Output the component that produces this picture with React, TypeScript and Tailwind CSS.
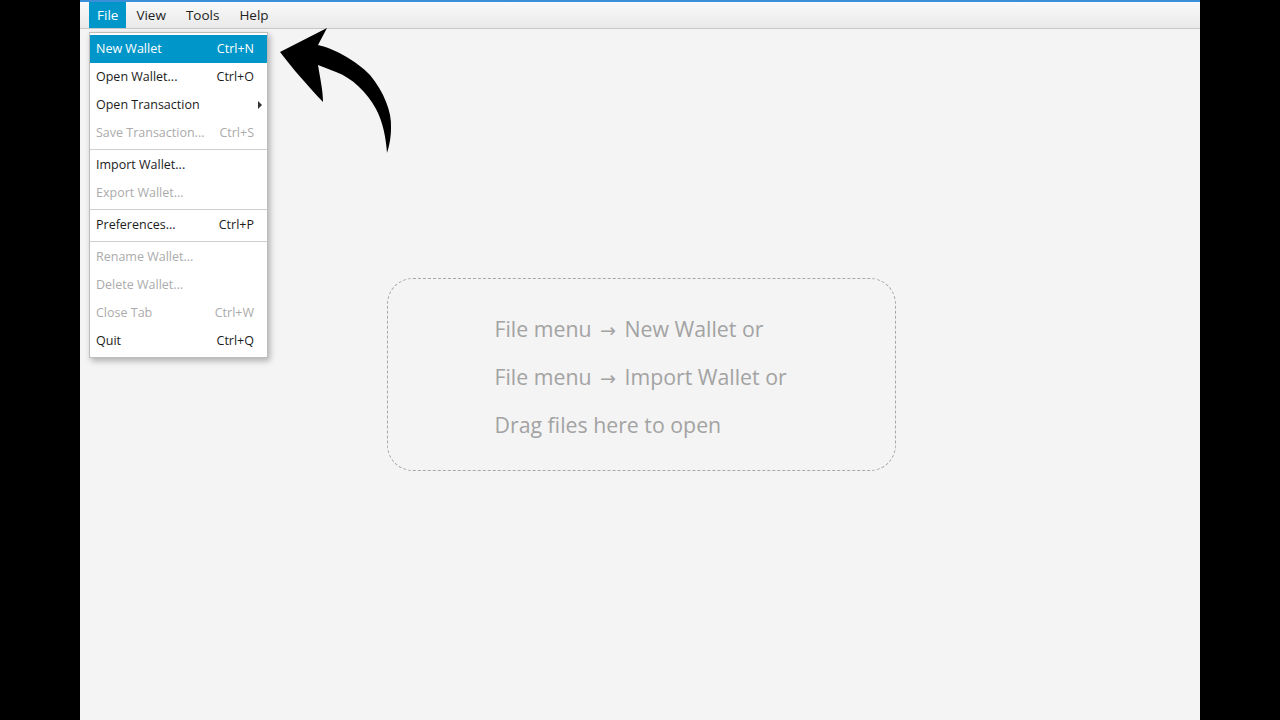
import React from "react";

type Item =
  | { sep: true }
  | { label: string; shortcut?: string; disabled?: boolean; active?: boolean; submenu?: boolean; sep?: false };

const items: Item[] = [
  { label: "New Wallet", shortcut: "Ctrl+N", active: true },
  { label: "Open Wallet...", shortcut: "Ctrl+O" },
  { label: "Open Transaction", submenu: true },
  { label: "Save Transaction...", shortcut: "Ctrl+S", disabled: true },
  { sep: true },
  { label: "Import Wallet..." },
  { label: "Export Wallet...", disabled: true },
  { sep: true },
  { label: "Preferences...", shortcut: "Ctrl+P" },
  { sep: true },
  { label: "Rename Wallet...", disabled: true },
  { label: "Delete Wallet...", disabled: true },
  { label: "Close Tab", shortcut: "Ctrl+W", disabled: true },
  { label: "Quit", shortcut: "Ctrl+Q" },
];

function Arrow() {
  return (
    <svg
      className="absolute left-[190px] top-[20px]"
      width="140"
      height="150"
      viewBox="0 0 140 150"
    >
      <path
        d="M10,32 L57,8 L48,25 C62,28 86,40 100,55 C114,72 122,92 121,108 C121,118 119,127 117,133 C116,118 113,102 106,89 C97,72 82,58 66,52 L48,45 C50,58 53,70 53,82 C38,66 22,48 10,32 Z"
        fill="#000"
      />
    </svg>
  );
}

const Ar = () => (
  <span style={{ fontFamily: '"DejaVu Sans", sans-serif' }} className="mx-[3px] text-[19px]">
    →
  </span>
);

export default function App() {
  return (
    <div
      className="flex h-[720px] w-[1280px] bg-black"
      style={{ fontFamily: '"Open Sans", "Noto Sans", sans-serif' }}
    >
      <div className="relative ml-[80px] flex h-[720px] w-[1120px] flex-col bg-[#f4f4f4]">
        {/* menubar */}
        <div className="flex h-[29px] flex-col border-b border-[#c9c9c9] bg-gradient-to-b from-[#fbfbfb] to-[#e9e9e9]">
          <div className="h-[2px] bg-[#3b8fd9]" />
          <div className="flex h-[26px] items-stretch pl-[9px] text-[13.5px] text-[#222]">
            <div className="flex items-center bg-[#0096c9] px-[8px] text-white">File</div>
            <div className="flex items-center px-[10px]">View</div>
            <div className="flex items-center px-[10px]">Tools</div>
            <div className="flex items-center px-[10px]">Help</div>
          </div>
        </div>

        {/* content */}
        <div className="flex flex-1 items-center justify-center">
          <div className="ml-[2px] flex h-[193px] w-[509px] flex-col justify-center gap-[17px] rounded-[26px] border border-dashed border-[#a8a8a8] pl-[107px] pt-[5px] text-[21.3px] leading-[30px] text-[#a3a3a3]">
            <div>
              File menu <Ar /> New Wallet or
            </div>
            <div>
              File menu <Ar /> Import Wallet or
            </div>
            <div>Drag files here to open</div>
          </div>
        </div>

        {/* dropdown */}
        <div className="absolute left-[9px] top-[32px] w-[179px] border border-[#bdbdbd] bg-white py-[2px] text-[12.5px] shadow-[2px_3px_6px_rgba(0,0,0,0.28)]">
          {items.map((it, i) =>
            "label" in it ? (
              <div
                key={i}
                className={
                  "flex h-[28px] items-center justify-between pl-[6px] pr-[13px] " +
                  (it.active
                    ? "bg-[#0096c9] text-white"
                    : it.disabled
                    ? "text-[#ababab]"
                    : "text-[#1c1c1c]")
                }
              >
                <span>{it.label}</span>
                {it.shortcut && <span>{it.shortcut}</span>}
                {it.submenu && (
                  <span className="mr-[-8px] h-0 w-0 border-y-[4px] border-l-[4px] border-y-transparent border-l-[#333]" />
                )}
              </div>
            ) : (
              <div key={i} className="flex h-[4px] items-center">
                <div className="h-px w-full bg-[#cfcfcf]" />
              </div>
            )
          )}
        </div>
        <Arrow />
      </div>
    </div>
  );
}
